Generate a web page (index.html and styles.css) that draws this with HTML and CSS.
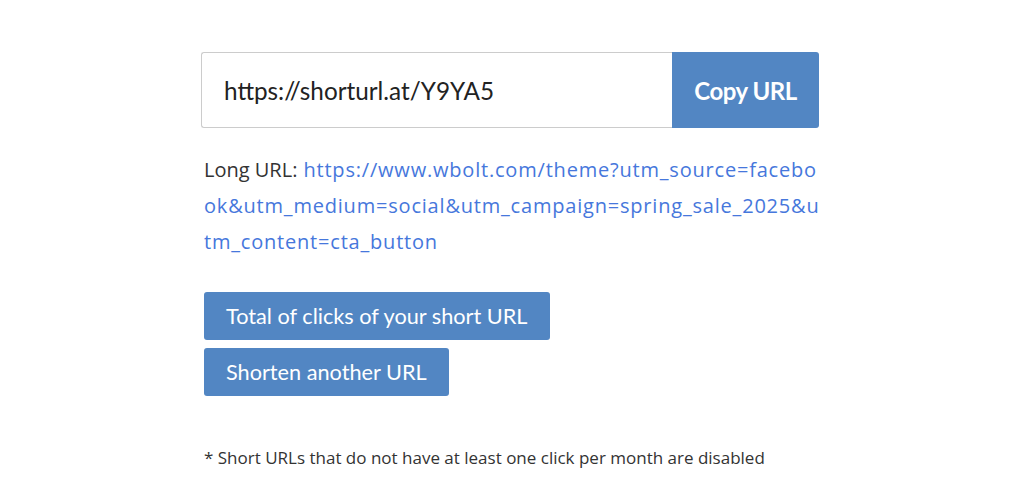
FILE: index.html
```html
<!DOCTYPE html>
<html lang="en">
<head>
<meta charset="utf-8">
<title>Short URL</title>
<link rel="stylesheet" href="styles.css">
</head>
<body>
<main class="page">
  <div class="copy-row">
    <input class="url-field" type="text" value="https://shorturl.at/Y9YA5" readonly>
    <button class="copy-btn" type="button">Copy URL</button>
  </div>
  <p class="long-url"><span class="label">Long URL:</span> <a href="#">https://www.wbolt.com/theme?utm_source=facebook&amp;utm_medium=social&amp;utm_campaign=spring_sale_2025&amp;utm_content=cta_button</a></p>
  <div class="actions">
    <button class="action-btn" type="button">Total of clicks of your short URL</button>
    <button class="action-btn" type="button">Shorten another URL</button>
  </div>
  <p class="note">* Short URLs that do not have at least one click per month are disabled</p>
</main>
</body>
</html>
```

FILE: styles.css
```css
html, body {
  margin: 0;
  padding: 0;
  background: #ffffff;
}

body {
  padding-right: 4px;
  font-family: "Open Sans", "Liberation Sans", sans-serif;
  color: #333333;
}

.page {
  width: 618px;
  margin: 0 auto;
  padding-top: 52px;
}

.copy-row {
  display: flex;
  height: 76px;
}

.url-field {
  flex: 1;
  box-sizing: border-box;
  height: 76px;
  margin: 0;
  border: 1px solid #cccccc;
  border-right: none;
  border-radius: 3px 0 0 3px;
  padding: 0 0 0 22px;
  font-family: Lato, sans-serif;
  font-size: 24.3px;
  color: #222222;
  background: #ffffff;
  outline: none;
}

.copy-btn {
  width: 147px;
  height: 76px;
  margin: 0;
  border: none;
  border-radius: 0 3px 3px 0;
  background: #5286c3;
  color: #ffffff;
  font-family: Lato, sans-serif;
  font-weight: 700;
  font-size: 24px;
  letter-spacing: -0.5px;
  cursor: pointer;
}

.long-url {
  margin: 24px 0 0 3px;
  width: 619px;
  font-family: "Open Sans", sans-serif;
  font-size: 20px;
  line-height: 36px;
  letter-spacing: 0.8px;
  word-break: break-all;
  color: #333333;
}

.long-url .label {
  letter-spacing: 0;
}

.long-url a {
  color: #4677dc;
  text-decoration: none;
}

.actions {
  display: flex;
  flex-direction: column;
  align-items: flex-start;
  gap: 8px;
  margin: 32px 0 0 3px;
}

.action-btn {
  height: 48px;
  padding: 0 22px;
  border: none;
  border-radius: 3px;
  background: #5286c3;
  color: #ffffff;
  font-family: Lato, sans-serif;
  font-size: 21.7px;
  cursor: pointer;
}

.note {
  margin: 50px 0 0 3px;
  font-family: "Open Sans", sans-serif;
  font-size: 17px;
  color: #333333;
}
```
